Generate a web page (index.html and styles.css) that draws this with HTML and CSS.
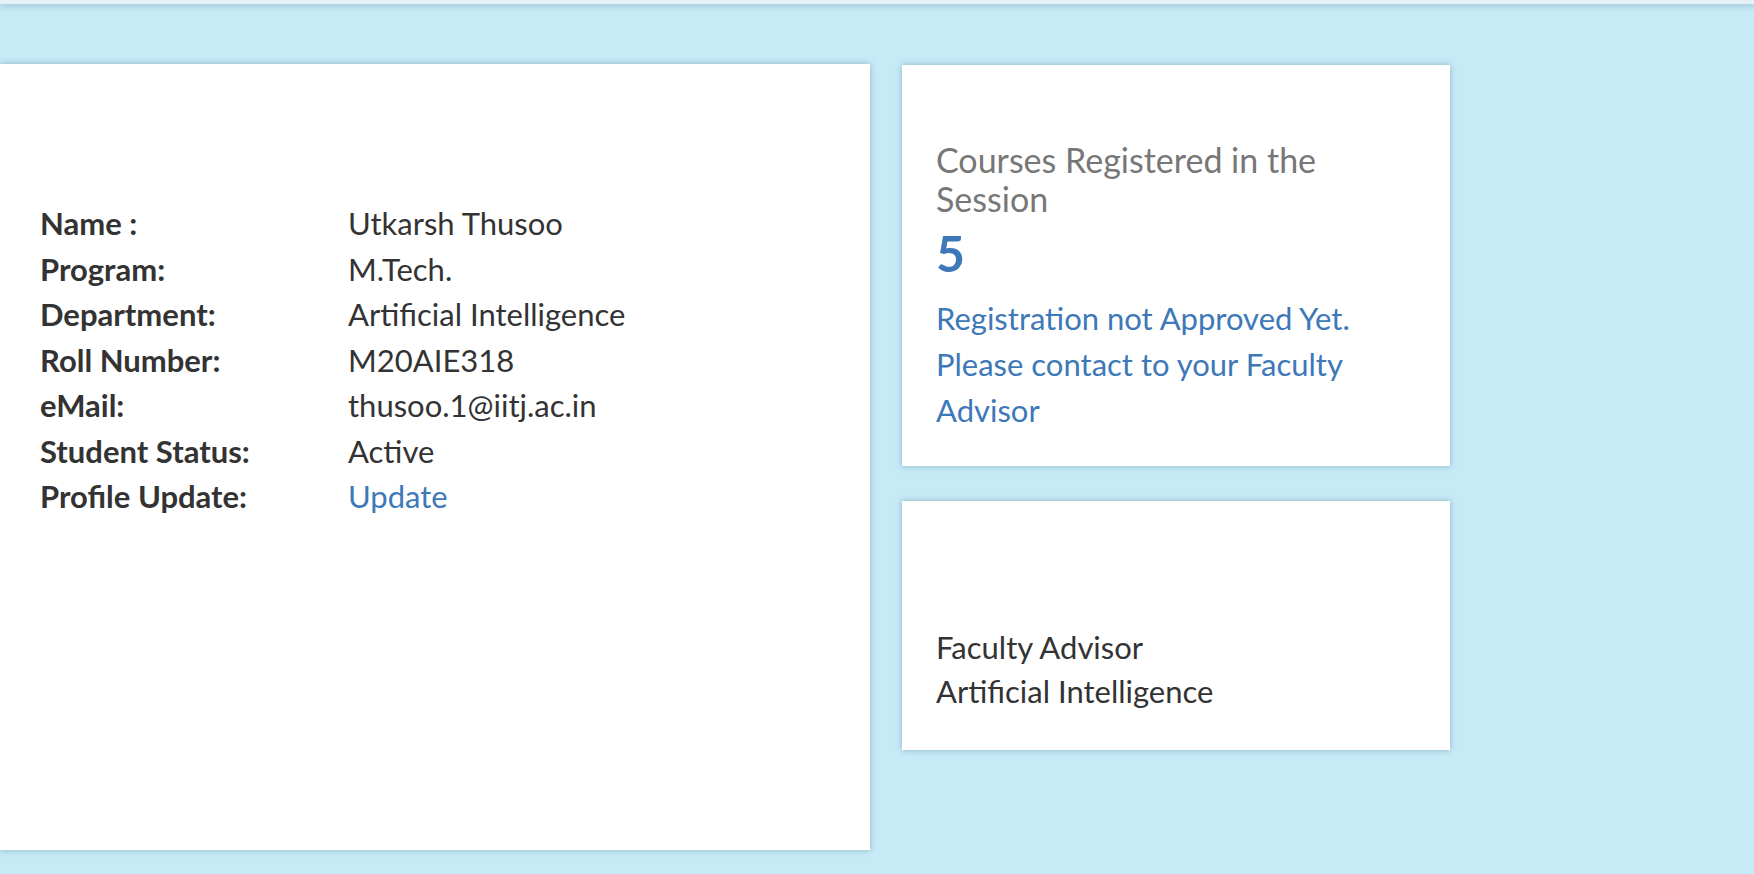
FILE: index.html
```html
<!DOCTYPE html>
<html lang="en">
<head>
<meta charset="utf-8">
<title>Student Profile</title>
<link rel="stylesheet" href="styles.css">
</head>
<body>
<div class="topbar"></div>
<div class="main">
  <section class="card profile">
    <div class="row"><span class="label">Name :</span><span class="value">Utkarsh Thusoo</span></div>
    <div class="row"><span class="label">Program:</span><span class="value">M.Tech.</span></div>
    <div class="row"><span class="label">Department:</span><span class="value">Artificial Intelligence</span></div>
    <div class="row"><span class="label">Roll Number:</span><span class="value">M20AIE318</span></div>
    <div class="row"><span class="label">eMail:</span><span class="value">thusoo.1@iitj.ac.in</span></div>
    <div class="row"><span class="label">Student Status:</span><span class="value">Active</span></div>
    <div class="row"><span class="label">Profile Update:</span><a class="value link" href="#">Update</a></div>
  </section>
  <div class="side">
    <section class="card courses">
      <h3 class="courses-title">Courses Registered in the Session</h3>
      <div class="count">5</div>
      <p class="notice">Registration not Approved Yet. Please contact to your Faculty Advisor</p>
    </section>
    <section class="card advisor">
      <div class="advisor-line">Faculty Advisor</div>
      <div class="advisor-line">Artificial Intelligence</div>
    </section>
  </div>
</div>
</body>
</html>
```

FILE: styles.css
```css
html, body {
  margin: 0;
  padding: 0;
}
body {
  background: #c6eaf6;
  font-family: Lato, "Liberation Sans", sans-serif;
  color: #333333;
  height: 874px;
  overflow: hidden;
}
.topbar {
  height: 4px;
  background: #e7f0f6;
  box-shadow: 0 2px 6px rgba(60, 110, 130, 0.35);
  position: relative;
  z-index: 2;
}
.main {
  display: flex;
  align-items: flex-start;
  gap: 32px;
  padding-top: 60px;
}
.card {
  background: #ffffff;
  box-shadow: 0 0 6px rgba(60, 100, 120, 0.4);
  box-sizing: border-box;
}
.profile {
  width: 870px;
  height: 786px;
  padding: 137px 0 0 40px;
}
.row {
  display: flex;
  font-size: 31px;
  line-height: 45.5px;
}
.label {
  width: 308px;
  font-weight: 700;
}
.value {
  font-weight: 400;
}
.link {
  color: #3d78b8;
  text-decoration: none;
}
.side {
  width: 548px;
  display: flex;
  flex-direction: column;
  gap: 35px;
  padding-top: 1px;
}
.courses {
  height: 401px;
  padding: 75px 84px 0 34px;
}
.courses-title {
  margin: 0;
  font-size: 34px;
  line-height: 39px;
  font-weight: 400;
  color: #777777;
}
.count {
  margin-top: 6px;
  font-size: 50px;
  line-height: 58px;
  font-weight: 700;
  color: #3d78b8;
}
.notice {
  margin: 14px 0 0;
  font-size: 31px;
  line-height: 45.8px;
  color: #3d78b8;
}
.advisor {
  height: 249px;
  padding: 124px 30px 0 34px;
}
.advisor-line {
  font-size: 31px;
  line-height: 44px;
}
```
